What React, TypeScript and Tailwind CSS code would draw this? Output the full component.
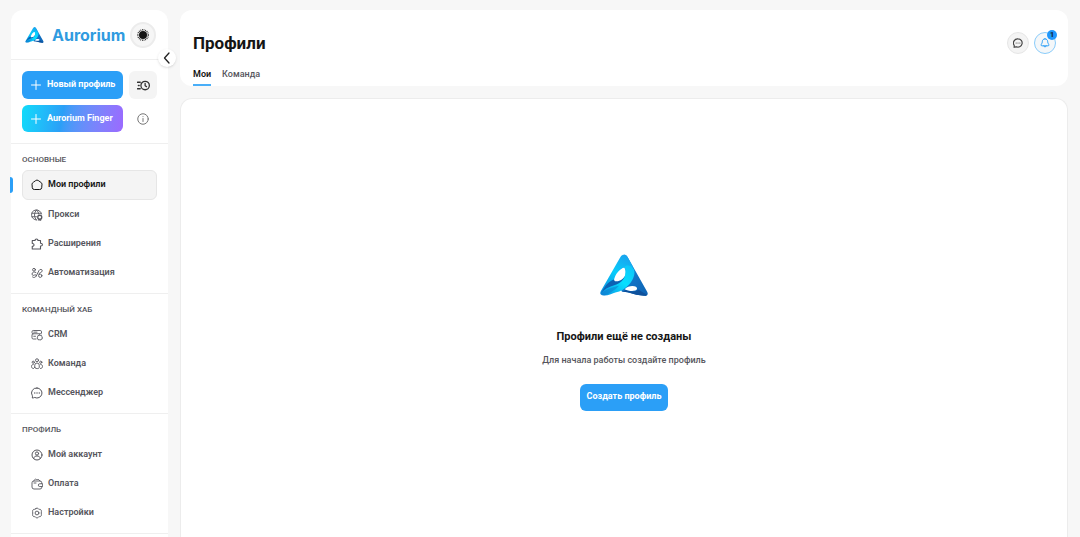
import { useId, useState } from 'react'
import type { ReactNode } from 'react'

interface NavItem {
  id: string
  label: string
  icon: ReactNode
}

interface NavSection {
  title: string
  items: NavItem[]
}

function Icon({ children, className = 'size-3', width = 2 }: { children: ReactNode; className?: string; width?: number }) {
  return (
    <svg
      viewBox="0 0 24 24"
      fill="none"
      stroke="currentColor"
      strokeWidth={width}
      strokeLinecap="round"
      strokeLinejoin="round"
      className={`shrink-0 ${className}`}
      aria-hidden="true"
    >
      {children}
    </svg>
  )
}

function Logo({ className }: { className: string }) {
  const id = useId()
  return (
    <svg viewBox="0 0 144 126" className={`shrink-0 ${className}`} aria-hidden="true">
      <defs>
        <linearGradient id={`${id}a`} x1="0.7" y1="0" x2="0.2" y2="1">
          <stop offset="0" stopColor="#18a5ee" />
          <stop offset="0.45" stopColor="#08cdfb" />
          <stop offset="1" stopColor="#0c8fe0" />
        </linearGradient>
        <linearGradient id={`${id}b`} x1="0" y1="0" x2="1" y2="1">
          <stop offset="0" stopColor="#1aa4f0" />
          <stop offset="0.55" stopColor="#1173c6" />
          <stop offset="1" stopColor="#0d62b2" />
        </linearGradient>
        <linearGradient id={`${id}c`} x1="1" y1="0" x2="0" y2="1">
          <stop offset="0" stopColor="#10c0f7" />
          <stop offset="0.45" stopColor="#05e0ff" />
          <stop offset="1" stopColor="#0f8fe2" />
        </linearGradient>
      </defs>
      {/* right face and its foot */}
      <path d="M72 1c6 0 9 4 12 9l57 101c5 9 1 14-7 13-17-1-32-5-46-9-8-2-16-3-22-3l-6-12 20-30L66 8z" fill={`url(#${id}b)`} />
      <path d="M78 106c12 6 30 7 38-1 6 4 14 11 25 15-2 4-6 4-10 4-16-1-29-5-43-9-8-2-16-3-22-3z" fill="#0e519c" />
      {/* left arm */}
      <path d="M72 1c-6 0-9 4-12 9L4 107c-4 7-4 11-1 13 10-14 22-24 38-32 0-21 12-43 33-49l26 0L84 10C81 5 78 1 72 1z" fill={`url(#${id}a)`} />
      {/* inner shadow below the eye */}
      <path d="M3 120c7-22 22-38 38-45l4 5c14 2 25-6 33-20l6 12c-10 24-50 20-81 48z" fill="#0d62b4" />
      {/* ribbon */}
      <path d="M74 37c6-8 22-4 28 8 5 15-4 33-14 44-12 14-26 21-42 25-12 3-20 9-32 9-8 0-12-2-11-6 12-18 32-22 48-28 20-8 30-26 23-52z" fill={`url(#${id}c)`} />
      <path d="M3 117c16-14 34-18 54-23-10 12-36 29-47 29-6 0-8-2-7-6z" fill="#0d70c4" opacity="0.45" />
      {/* openings */}
      <path d="M51 79c-3-16 5-33 20-39 8 6 6 18-2 28-5 6-11 9-18 11z" fill="#fff" />
      <path d="M74 104c9-10 26-12 34-7 6 5 3 11-6 12-10 1-20-1-28-5z" fill="#fff" />
    </svg>
  )
}

const plus = (
  <Icon className="size-3" width={2}>
    <path d="M12 3v18M3 12h18" />
  </Icon>
)

const chatPaths = (
  <>
    <path d="M12 2a10 10 0 1 1-4.600 18.900C6 21.600 4 22 2.500 22c.6-1.500.7-3 .2-4.600A10 10 0 0 1 12 2z" />
    <path d="M7.500 12h.1M12 12h.1M16.500 12h.1" strokeWidth={2.600} />
  </>
)

const sections: NavSection[] = [
  {
    title: 'Основные',
    items: [
      {
        id: 'profiles',
        label: 'Мои профили',
        icon: (
          <Icon>
            <path d="M9.500 3a4 4 0 0 1 5 0l5.500 4a4 4 0 0 1 2 3.300l-.6 7.200a4 4 0 0 1-4 3.500H6.600a4 4 0 0 1-4-3.500L2 10.300A4 4 0 0 1 4 7z" />
          </Icon>
        ),
      },
      {
        id: 'proxy',
        label: 'Прокси',
        icon: (
          <Icon width={1.800}>
            <path d="M21 10A10 10 0 1 0 11 22M2 8.500h18M2 15.500h9M11 2C5.500 8 5.500 16 11 22M11 2c3 3 4.200 5 4.200 8" />
            <circle cx="17.500" cy="16.500" r="4" strokeWidth="2.600" />
            <path d="M15.500 20.500V23l2-1 2 1v-2.500" />
          </Icon>
        ),
      },
      {
        id: 'extensions',
        label: 'Расширения',
        icon: (
          <Icon width={2.200}>
            <path d="M2.500 5h5.700C7.500.8 14.500.8 13.800 5H19v5.500c5-.8 5 6.300 0 5.500V22H2.500v-5.500c4.700.6 4.700-6 0-5.500z" />
          </Icon>
        ),
      },
      {
        id: 'automation',
        label: 'Автоматизация',
        icon: (
          <Icon width={1.800}>
            <circle cx="6" cy="5.500" r="2.800" />
            <path d="M10 11c-3-2.500-8-.5-8 3 0 3 3.500 3.500 5 2s4 0 3 2.500-5 3.500-7 1.500M10.500 18l5.500-11c1.500-3 6.500-3 6.500.5 0 4-7 3-7 7" />
            <circle cx="18.500" cy="17.500" r="3.300" />
          </Icon>
        ),
      },
    ],
  },
  {
    title: 'Командный хаб',
    items: [
      {
        id: 'crm',
        label: 'CRM',
        icon: (
          <Icon width={1.800}>
            <path d="M21 8V5.500A2.500 2.500 0 0 0 18.500 3h-14A2.500 2.500 0 0 0 2 5.500V7a2.500 2.500 0 0 0 2.500 2.500H20M4.500 9.500A2.500 2.500 0 0 0 2 12v5.500A2.500 2.500 0 0 0 4.500 20H10M5.500 6.300H12M5.500 14.500H9" />
            <path d="M17.500 11.500l1.300 1.500 2-.2.500 2 1.700 1.200-1 1.700.6 2-2 .5-.8 1.800-2.300-.5-2.300.5-.8-1.800-1.900-.5.500-2-.9-1.700 1.700-1.200.3-2 2 .2z" />
          </Icon>
        ),
      },
      {
        id: 'team',
        label: 'Команда',
        icon: (
          <Icon width={1.800}>
            <circle cx="12" cy="4.500" r="3" />
            <circle cx="4.500" cy="8.500" r="2.200" />
            <circle cx="19.500" cy="8.500" r="2.200" />
            <path d="M7.500 19v-4.500a4.500 4.500 0 0 1 9 0V19c0 3-9 3-9 0zM5 21c-3.500-.5-4-2-4-4 0-2.500 1-4 3.500-4M19 21c3.500-.5 4-2 4-4 0-2.500-1-4-3.500-4" />
          </Icon>
        ),
      },
      { id: 'messenger', label: 'Мессенджер', icon: <Icon>{chatPaths}</Icon> },
    ],
  },
  {
    title: 'Профиль',
    items: [
      {
        id: 'account',
        label: 'Мой аккаунт',
        icon: (
          <Icon>
            <circle cx="12" cy="12" r="10" />
            <circle cx="12" cy="9" r="3.200" />
            <path d="M5.500 19c.5-4 3-5 6.500-5s6 1 6.500 5" />
          </Icon>
        ),
      },
      {
        id: 'billing',
        label: 'Оплата',
        icon: (
          <Icon width={1.800}>
            <path d="M21.500 11V9.500a3.500 3.500 0 0 0-3.500-3.500H5.500A3.500 3.500 0 0 0 2 9.500V18a4 4 0 0 0 4 4h12a3.500 3.500 0 0 0 3.500-3.500V17M5 6l3-3c1-1 2-1 3 0l1 .8c1-1.300 3-1.300 4 0L18 6M6 10h4" />
            <path d="M22.500 11.500h-5a2.800 2.800 0 0 0 0 5.600h5z" />
          </Icon>
        ),
      },
      {
        id: 'settings',
        label: 'Настройки',
        icon: (
          <Icon width={1.800}>
            <path d="M9.500 3.500c.7-2 4.300-2 5 0 .4 1 1.500 1.500 2.500 1.200 2-.6 4.500 2.300 3.800 4.300-.4 1.100-.4 4.900 0 6 .7 2-1.800 4.900-3.800 4.300-1-.3-2.100.2-2.500 1.200-.7 2-4.300 2-5 0-.4-1-1.500-1.500-2.500-1.200-2 .6-4.500-2.300-3.800-4.300.4-1.100.4-4.900 0-6C2.500 7 5 4.100 7 4.700c1 .3 2.100-.2 2.500-1.200z" />
            <circle cx="12" cy="12" r="3.800" />
          </Icon>
        ),
      },
    ],
  },
]

function Sidebar() {
  const [active, setActive] = useState('profiles')

  return (
    <aside className="relative w-[157px] shrink-0 rounded-t-xl bg-white">
      <div className="flex h-[50px] items-center border-b border-[#efefef] pl-[14px] pr-3">
        <a href="#" className="flex flex-1 items-center gap-2">
          <Logo className="h-4 w-[19px]" />
          <span className="font-['Inter'] text-base font-bold text-[#2f9be0]">Aurorium</span>
        </a>
        <button
          type="button"
          aria-label="Сменить тему"
          className="flex size-[26px] items-center justify-center rounded-full border-2 border-[#ececec] bg-[#f6f6f6] text-[#151515]"
        >
          <svg viewBox="0 0 24 24" className="size-3" aria-hidden="true">
            <circle cx="12" cy="12" r="8" fill="currentColor" />
            <circle cx="12" cy="12" r="10.500" fill="none" stroke="currentColor" strokeWidth="2.600" strokeDasharray="1.600 1.700" />
          </svg>
        </button>
      </div>

      <button
        type="button"
        aria-label="Свернуть меню"
        className="absolute -right-2 top-[39px] flex size-[18px] items-center justify-center rounded-full bg-white text-[#222] shadow-sm"
      >
        <Icon className="size-3" width={2.600}>
          <path d="M16 2 7 12l9 10" />
        </Icon>
      </button>

      <div className="grid grid-cols-[1fr_28px] gap-[6px] px-[11px] py-[11px]">
        <button type="button" className="flex h-7 items-center gap-[5px] rounded-md bg-[#2b9ff7] pl-2 text-[9px] font-bold text-white">
          {plus}
          Новый профиль
        </button>
        <button
          type="button"
          aria-label="Быстрый профиль"
          className="flex h-7 items-center justify-center rounded-md bg-[#f4f4f4] text-[#333]"
        >
          <Icon className="size-[13px]" width={2.400}>
            <circle cx="15" cy="12" r="7.800" />
            <path d="M15 8v4.500l2.500 1.500M1 6h5M2.500 12H4M1 18h5" />
          </Icon>
        </button>
        <button
          type="button"
          className="flex h-[27px] items-center gap-[5px] rounded-md bg-linear-100 from-[#10dcfa] via-[#2b9ff7] via-40% to-[#9b69ff] pl-2 text-[9px] font-bold text-white"
        >
          {plus}
          Aurorium Finger
        </button>
        <button type="button" aria-label="Подробнее" className="flex items-center justify-center text-[#777]">
          <Icon className="size-3">
            <circle cx="12" cy="12" r="10.500" />
            <path d="M12 11v6M12 7.300v.1" />
          </Icon>
        </button>
      </div>

      <nav className="border-b border-[#efefef]">
        {sections.map((section) => (
          <section key={section.title} className="border-t border-[#efefef] pb-[6px] pt-[10px]">
            <h2 className="mb-1 px-[11px] text-[8px] leading-3 font-medium text-[#55555c] uppercase">{section.title}</h2>
            <ul>
              {section.items.map((item) => (
                <li
                  key={item.id}
                  className={`px-[11px] ${item.id === active ? "relative before:absolute before:-left-px before:top-[7px] before:h-4 before:w-[3px] before:rounded-r-sm before:bg-[#2b9ff7] before:content-['']" : ''}`}
                >
                  <button
                    type="button"
                    onClick={() => setActive(item.id)}
                    className={`flex w-full items-center gap-[5px] rounded-md text-[9px] font-semibold ${
                      item.id === active
                        ? 'h-[30px] border border-[#e6e6e6] bg-[#f4f4f4] pl-2 text-[#151515]'
                        : 'h-[29px] pl-[9px] text-[#55555c]'
                    }`}
                  >
                    {item.icon}
                    {item.label}
                  </button>
                </li>
              ))}
            </ul>
          </section>
        ))}
      </nav>
    </aside>
  )
}

function PageHeader() {
  const [tab, setTab] = useState('Мои')

  return (
    <header className="flex h-[76px] shrink-0 justify-between rounded-xl bg-white pl-[13px] pr-3">
      <div className="flex flex-col justify-between pt-[21px]">
        <h1 className="text-[17px] leading-6 font-bold text-[#151515]">Профили</h1>
        <div className="flex gap-[11px]" role="tablist">
          {['Мои', 'Команда'].map((name) => (
            <button
              key={name}
              type="button"
              role="tab"
              aria-selected={tab === name}
              onClick={() => setTab(name)}
              className={`border-b-2 pb-[3px] text-[9px] leading-[14px] ${
                tab === name ? 'border-[#49aef8] font-semibold text-[#151515]' : 'border-transparent font-medium text-[#55555c]'
              }`}
            >
              {name}
            </button>
          ))}
        </div>
      </div>

      <div className="flex gap-[5px] pt-[22px]">
        <button
          type="button"
          aria-label="Сообщения"
          className="flex size-[22px] items-center justify-center rounded-full border border-[#e6e6e6] bg-[#f4f4f4] text-[#444]"
        >
          <Icon className="size-[10px]" width={2.800}>
            {chatPaths}
          </Icon>
        </button>
        <button
          type="button"
          aria-label="Уведомления"
          className="relative flex size-[22px] items-center justify-center rounded-full border border-[#8accfa] bg-[#f4f7f9] text-[#2b9ff7]"
        >
          <Icon className="size-[10px]" width={2.400}>
            <path d="M12 2c-4.500 0-6.500 3.200-6.500 7 0 4-3 6-3 8 0 1.200 1 1.800 2.500 1.800h14c1.500 0 2.500-.6 2.500-1.800 0-2-3-4-3-8 0-3.800-2-7-6.500-7zM9 19c.5 3.500 5.500 3.500 6 0" />
          </Icon>
          <span className="absolute -right-[2px] -top-[3px] flex size-[10px] items-center justify-center rounded-full bg-[#1f97fb] text-[8px] leading-none font-bold text-[#10243a]">
            1
          </span>
        </button>
      </div>
    </header>
  )
}

export default function App() {
  return (
    <div className="flex h-screen gap-3 overflow-hidden bg-[#f7f7f7] pl-[11px] pr-3 pt-[10px] font-['Roboto',sans-serif]">
      <Sidebar />
      <div className="flex min-w-0 flex-1 flex-col gap-3">
        <PageHeader />
        <main className="flex flex-1 flex-col items-center justify-center rounded-t-xl border border-b-0 border-[#ececec] bg-white pt-7">
          <Logo className="h-[43px] w-12" />
          <h2 className="mt-8 text-[11px] leading-4 font-bold text-[#151515]">Профили ещё не созданы</h2>
          <p className="mt-2 text-[9px] leading-[14px] font-medium text-[#55555c]">Для начала работы создайте профиль</p>
          <button type="button" className="mt-[17px] h-[27px] rounded-md bg-[#2b9ff7] px-[7px] text-[9px] font-bold text-white">
            Создать профиль
          </button>
        </main>
      </div>
    </div>
  )
}
